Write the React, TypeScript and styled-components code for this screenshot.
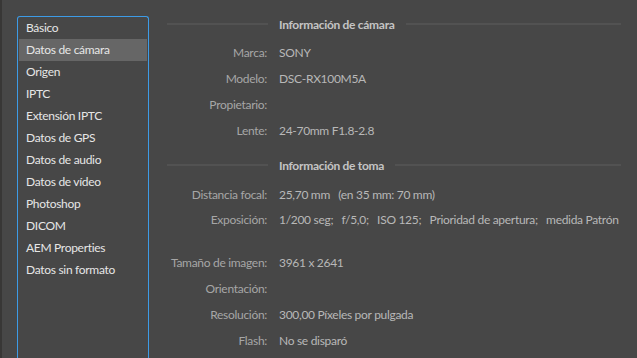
import React from 'react';
import styled, { createGlobalStyle } from 'styled-components';

const GlobalStyle = createGlobalStyle`
  html, body {
    margin: 0;
    padding: 0;
    background: #474747;
    height: 100%;
    overflow: hidden;
  }
  body {
    font-family: Lato, "Liberation Sans", sans-serif;
    font-size: 12px;
    letter-spacing: -0.3px;
  }
`;

const categories = [
  'Básico',
  'Datos de cámara',
  'Origen',
  'IPTC',
  'Extensión IPTC',
  'Datos de GPS',
  'Datos de audio',
  'Datos de vídeo',
  'Photoshop',
  'DICOM',
  'AEM Properties',
  'Datos sin formato',
];

interface Field {
  label: string;
  value?: string;
  spaced?: boolean;
}

const cameraFields: Field[] = [
  { label: 'Marca:', value: 'SONY' },
  { label: 'Modelo:', value: 'DSC-RX100M5A' },
  { label: 'Propietario:' },
  { label: 'Lente:', value: '24-70mm F1.8-2.8' },
];

const shotFields: Field[] = [
  { label: 'Distancia focal:', value: '25,70 mm   (en 35 mm: 70 mm)' },
  { label: 'Exposición:', value: '1/200 seg;   f/5,0;   ISO 125;   Prioridad de apertura;   medida Patrón' },
  { label: 'Tamaño de imagen:', value: '3961 x 2641', spaced: true },
  { label: 'Orientación:' },
  { label: 'Resolución:', value: '300,00 Píxeles por pulgada' },
  { label: 'Flash:', value: 'No se disparó' },
];

const App: React.FC = () => {
  return (
    <>
      <GlobalStyle />
      <Window>
        <Sidebar>
          {categories.map((name) => (
            <CategoryItem key={name} selected={name === 'Datos de cámara'}>
              {name}
            </CategoryItem>
          ))}
        </Sidebar>

        <Details>
          <SectionHeader>
            <Rule width={101} />
            <SectionTitle>Información de cámara</SectionTitle>
            <Rule />
          </SectionHeader>
          {cameraFields.map((f) => (
            <FieldRow key={f.label}>
              <Label>{f.label}</Label>
              <Value>{f.value}</Value>
            </FieldRow>
          ))}

          <SectionHeader spaced>
            <Rule width={101} />
            <SectionTitle>Información de toma</SectionTitle>
            <Rule />
          </SectionHeader>
          {shotFields.map((f) => (
            <FieldRow key={f.label} spaced={f.spaced}>
              <Label>{f.label}</Label>
              <Value>{f.value}</Value>
            </FieldRow>
          ))}
        </Details>
      </Window>
    </>
  );
};

const Window = styled.div`
  display: flex;
  height: 358px;
  border-left: 2px solid #383736;
  box-sizing: border-box;
`;

const Sidebar = styled.ul`
  list-style: none;
  margin: 16px 0 0 15px;
  padding: 0 1px;
  width: 128px;
  border: 1px solid #3d9be6;
  border-bottom: none;
  border-radius: 3px 3px 0 0;
  box-sizing: content-box;
  flex-shrink: 0;
`;

const CategoryItem = styled.li<{ selected?: boolean }>`
  height: 22px;
  line-height: 22px;
  padding-left: 7px;
  color: #e6e6e6;
  background: ${({ selected }) => (selected ? '#666666' : 'transparent')};
  white-space: nowrap;
`;

const Details = styled.div`
  flex: 1;
  min-width: 0;
  padding: 15px 16px 0 18px;
`;

const SectionHeader = styled.div<{ spaced?: boolean }>`
  display: flex;
  align-items: center;
  gap: 11px;
  height: 18px;
  margin-top: ${({ spaced }) => (spaced ? '13px' : '0')};
  margin-bottom: 7px;
`;

const Rule = styled.div<{ width?: number }>`
  height: 2px;
  background: #525252;
  ${({ width }) => (width ? `width: ${width}px; flex-shrink: 0;` : 'flex: 1;')}
`;

const SectionTitle = styled.span`
  color: #c4c4c4;
  font-weight: 700;
  white-space: nowrap;
`;

const FieldRow = styled.div<{ spaced?: boolean }>`
  display: grid;
  grid-template-columns: 100px minmax(0, 1fr);
  column-gap: 12px;
  height: 25.8px;
  align-items: center;
  margin-top: ${({ spaced }) => (spaced ? '17px' : '0')};
`;

const Label = styled.span`
  color: #a6a6a6;
  text-align: right;
  white-space: nowrap;
`;

const Value = styled.span`
  color: #b8b8b8;
  white-space: pre;
`;

export default App;
